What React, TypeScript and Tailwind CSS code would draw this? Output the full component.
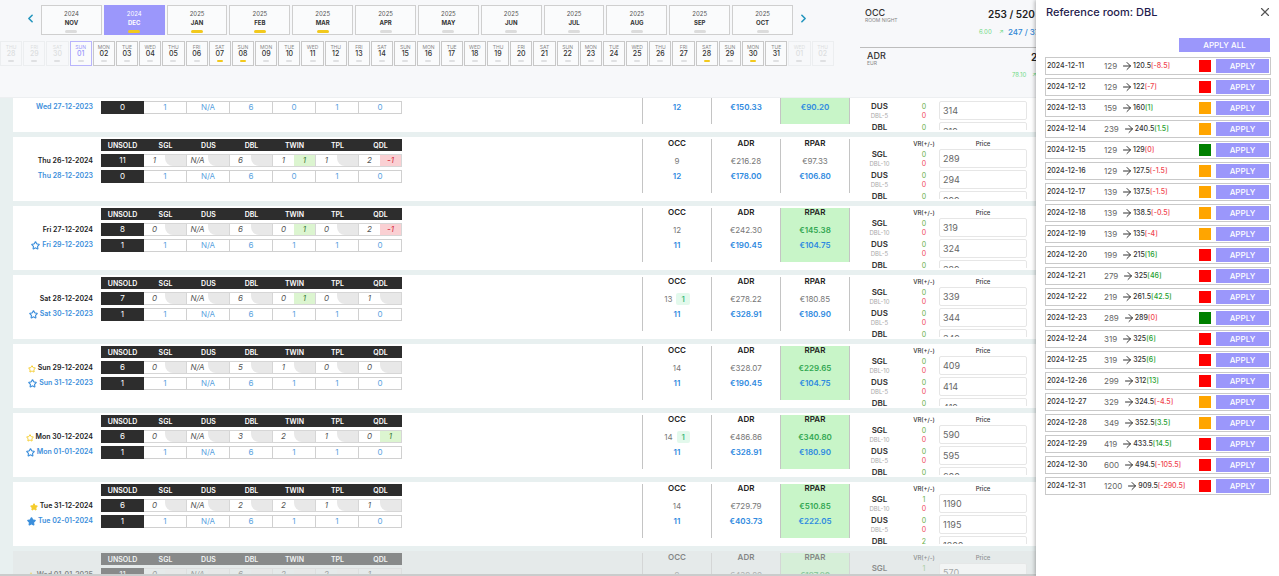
import { useState } from "react";
import { ArrowRight, ChevronLeft, ChevronRight, Star, X } from "lucide-react";
import clsx from "clsx";

type StarKind = "outline" | "filled" | undefined;

type Day = {
  date?: string;
  star?: StarKind;
  unsold?: string;
  rooms?: string[];
  deltas?: Record<number, string>;
  occ?: string;
  occUp?: boolean;
  adr?: string;
  rpar?: string;
  past?: {
    date: string;
    star?: StarKind;
    unsold: string;
    rooms: string[];
    occ: string;
    adr: string;
    rpar: string;
  };
  best?: boolean;
  closed?: boolean;
  prices: string[];
  vr: string[];
};

const roomTypes = ["SGL", "DUS", "DBL", "TWIN", "TPL", "QDL"];
const weekdays = ["SUN", "MON", "TUE", "WED", "THU", "FRI", "SAT"];

const months = [
  { year: 2024, name: "NOV" },
  { year: 2024, name: "DEC", event: true },
  { year: 2025, name: "JAN", event: true },
  { year: 2025, name: "FEB", event: true },
  { year: 2025, name: "MAR", event: true },
  { year: 2025, name: "APR" },
  { year: 2025, name: "MAY" },
  { year: 2025, name: "JUN" },
  { year: 2025, name: "JUL" },
  { year: 2025, name: "AUG" },
  { year: 2025, name: "SEP" },
  { year: 2025, name: "OCT" },
];

const calendar = [
  { week: "THU", num: "28", outside: true },
  { week: "FRI", num: "29", outside: true },
  { week: "SAT", num: "30", outside: true },
  ...Array.from({ length: 31 }, (_, i) => ({
    week: weekdays[i % 7],
    num: String(i + 1).padStart(2, "0"),
    outside: false,
  })),
  { week: "WED", num: "01", outside: true },
  { week: "THU", num: "02", outside: true },
];
const eventDays = ["07", "08", "28", "30"];

const days: Day[] = [
  {
    past: { date: "Wed 27-12-2023", unsold: "0", rooms: ["1", "N/A", "6", "0", "1", "0"], occ: "12", adr: "€150.33", rpar: "€90.20" },
    best: true,
    prices: ["309", "314", "319"],
    vr: ["0", "0", "0"],
  },
  {
    date: "Thu 26-12-2024",
    unsold: "11",
    rooms: ["1", "N/A", "6", "1", "1", "2"],
    deltas: { 3: "1", 5: "-1" },
    occ: "9",
    adr: "€216.28",
    rpar: "€97.33",
    past: { date: "Thu 28-12-2023", unsold: "0", rooms: ["1", "N/A", "6", "0", "1", "0"], occ: "12", adr: "€178.00", rpar: "€106.80" },
    prices: ["289", "294", "299"],
    vr: ["0", "0", "0"],
  },
  {
    date: "Fri 27-12-2024",
    unsold: "8",
    rooms: ["0", "N/A", "6", "0", "0", "2"],
    deltas: { 3: "1", 5: "-1" },
    occ: "12",
    adr: "€242.30",
    rpar: "€145.38",
    past: { date: "Fri 29-12-2023", star: "outline", unsold: "1", rooms: ["1", "N/A", "6", "1", "1", "0"], occ: "11", adr: "€190.45", rpar: "€104.75" },
    best: true,
    prices: ["319", "324", "329"],
    vr: ["0", "0", "0"],
  },
  {
    date: "Sat 28-12-2024",
    unsold: "7",
    rooms: ["0", "N/A", "6", "0", "0", "1"],
    deltas: { 3: "1" },
    occ: "13",
    occUp: true,
    adr: "€278.22",
    rpar: "€180.85",
    past: { date: "Sat 30-12-2023", star: "outline", unsold: "1", rooms: ["1", "N/A", "6", "1", "1", "0"], occ: "11", adr: "€328.91", rpar: "€180.90" },
    prices: ["339", "344", "349"],
    vr: ["0", "0", "0"],
  },
  {
    date: "Sun 29-12-2024",
    star: "outline",
    unsold: "6",
    rooms: ["0", "N/A", "5", "1", "0", "0"],
    occ: "14",
    adr: "€328.07",
    rpar: "€229.65",
    past: { date: "Sun 31-12-2023", star: "outline", unsold: "1", rooms: ["1", "N/A", "6", "1", "1", "0"], occ: "11", adr: "€190.45", rpar: "€104.75" },
    best: true,
    prices: ["409", "414", "419"],
    vr: ["0", "0", "0"],
  },
  {
    date: "Mon 30-12-2024",
    star: "outline",
    unsold: "6",
    rooms: ["0", "N/A", "3", "2", "1", "0"],
    deltas: { 5: "1" },
    occ: "14",
    occUp: true,
    adr: "€486.86",
    rpar: "€340.80",
    past: { date: "Mon 01-01-2024", star: "outline", unsold: "1", rooms: ["1", "N/A", "6", "1", "1", "0"], occ: "11", adr: "€328.91", rpar: "€180.90" },
    best: true,
    prices: ["590", "595", "600"],
    vr: ["0", "0", "0"],
  },
  {
    date: "Tue 31-12-2024",
    star: "filled",
    unsold: "6",
    rooms: ["0", "N/A", "2", "2", "1", "1"],
    occ: "14",
    adr: "€729.79",
    rpar: "€510.85",
    past: { date: "Tue 02-01-2024", star: "filled", unsold: "1", rooms: ["1", "N/A", "6", "1", "1", "0"], occ: "11", adr: "€403.73", rpar: "€222.05" },
    best: true,
    prices: ["1190", "1195", "1200"],
    vr: ["1", "0", "2"],
  },
  {
    date: "Wed 01-01-2025",
    star: "filled",
    unsold: "11",
    rooms: ["0", "N/A", "6", "2", "2", "1"],
    occ: "9",
    adr: "€439.80",
    rpar: "€197.90",
    best: true,
    closed: true,
    prices: ["570"],
    vr: ["1"],
  },
];

// [date, current price, suggested price, difference, status]
const suggestions: [string, string, string, string, "red" | "orange" | "green"][] = [
  ["2024-12-11", "129", "120.5", "-8.5", "red"],
  ["2024-12-12", "129", "122", "-7", "red"],
  ["2024-12-13", "159", "160", "1", "orange"],
  ["2024-12-14", "239", "240.5", "1.5", "orange"],
  ["2024-12-15", "129", "129", "0", "green"],
  ["2024-12-16", "129", "127.5", "-1.5", "orange"],
  ["2024-12-17", "139", "137.5", "-1.5", "orange"],
  ["2024-12-18", "139", "138.5", "-0.5", "orange"],
  ["2024-12-19", "139", "135", "-4", "orange"],
  ["2024-12-20", "199", "215", "16", "red"],
  ["2024-12-21", "279", "325", "46", "red"],
  ["2024-12-22", "219", "261.5", "42.5", "red"],
  ["2024-12-23", "289", "289", "0", "green"],
  ["2024-12-24", "319", "325", "6", "red"],
  ["2024-12-25", "319", "325", "6", "red"],
  ["2024-12-26", "299", "312", "13", "red"],
  ["2024-12-27", "329", "324.5", "-4.5", "orange"],
  ["2024-12-28", "349", "352.5", "3.5", "orange"],
  ["2024-12-29", "419", "433.5", "14.5", "red"],
  ["2024-12-30", "600", "494.5", "-105.5", "red"],
  ["2024-12-31", "1200", "909.5", "-290.5", "red"],
];

const statusColor = {
  red: "bg-[#ff0000]",
  orange: "bg-[#ffa500]",
  green: "bg-[#008000]",
};

function MonthBar() {
  const [active, setActive] = useState("DEC");
  return (
    <div className="flex items-start pl-6">
      <button aria-label="Previous months" className="mt-[7px] mr-1 text-[#2596be]">
        <ChevronLeft size={13} strokeWidth={3} />
      </button>
      <div className="grid w-[752px] grid-cols-12 gap-[2px]">
        {months.map((m) => (
          <button
            key={m.name}
            onClick={() => setActive(m.name)}
            className={clsx(
              "flex h-[30px] flex-col items-center border text-[6px] leading-[9px] pt-[3px]",
              active === m.name
                ? "border-[#9b97fb] bg-[#9b97fb] text-white"
                : "border-[#cfcfcf] bg-[#fafbfc] text-[#555]",
            )}
          >
            <span>{m.year}</span>
            <span className={clsx("text-[6px] font-bold", active !== m.name && "text-[#333]")}>{m.name}</span>
            <span className={clsx("mt-[3px] h-[3px] w-3 rounded-xs", m.event ? "bg-[#f2c91d]" : "bg-[#dcdcdc]")} />
          </button>
        ))}
      </div>
      <button aria-label="Next months" className="mt-[7px] ml-1 text-[#2596be]">
        <ChevronRight size={13} strokeWidth={3} />
      </button>
    </div>
  );
}

function DayBar() {
  return (
    <div className="mt-[6px] flex w-[834px] gap-px">
      {calendar.map((d, i) => (
        <button
          key={i}
          className={clsx(
            "flex h-[25px] min-w-0 flex-1 flex-col items-center border pt-[2px] text-[5px] leading-[6px]",
            d.outside
              ? "border-[#eceef0] text-[#dcdee0]"
              : d.num === "01"
                ? "border-[#b9b5fb] bg-[#fafbfc] text-[#9b97fb]"
                : "border-[#c8c8c8] bg-[#fafbfc] text-[#888]",
          )}
        >
          <span>{d.week}</span>
          <span
            className={clsx(
              "text-[7px] leading-[7px] font-medium",
              !d.outside && d.num !== "01" && "text-[#333]",
            )}
          >
            {d.num}
          </span>
          <span
            className={clsx(
              "mt-[3px] h-[2px] w-[6px] rounded-xs",
              !d.outside && eventDays.includes(d.num) ? "bg-[#f2c91d]" : "bg-[#dfe0e2]",
            )}
          />
        </button>
      ))}
    </div>
  );
}

function Summary() {
  return (
    <div className="w-[176px] shrink-0 overflow-hidden whitespace-nowrap">
      <div className="flex h-[42px] items-start pl-[5px]">
        <div className="w-[114px] shrink-0 pt-[3px]">
          <div className="text-[9px] leading-[9px] font-medium text-[#333]">OCC</div>
          <div className="text-[5px] leading-[6px] text-[#888]">ROOM NIGHT</div>
        </div>
        <div className="shrink-0">
          <div className="pl-[9px] text-[10px] leading-[18px] font-semibold text-[#222]">253 / 520</div>
          <div className="flex items-center leading-[18px]">
            <span className="w-5 text-[6px] text-[#6fd985]">6.00</span>
            <span className="w-[9px] text-[6px] text-[#6fd985]">↗</span>
            <span className="text-[8px] font-medium text-[#2f86d6]">247 / 377</span>
          </div>
        </div>
      </div>
      <div className="flex h-[50px] items-start border-t border-[#bdbdbd] pl-[7px]">
        <div className="w-[145px] shrink-0 pt-[3px]">
          <div className="text-[9px] leading-[9px] font-medium text-[#333]">ADR</div>
          <div className="text-[5px] leading-[6px] text-[#888]">EUR</div>
        </div>
        <div className="shrink-0">
          <div className="pl-[19px] text-[10px] leading-[18px] font-semibold text-[#222]">2</div>
          <div className="flex items-center text-[6px] leading-[18px] text-[#6fd985]">
            <span className="w-5">78.10</span>
            <span>↗</span>
          </div>
        </div>
      </div>
    </div>
  );
}

function DateLabel({ date, star, past }: { date?: string; star?: StarKind; past?: boolean }) {
  return (
    <div
      className={clsx(
        "flex h-[15px] items-center justify-end gap-[2px] text-[7px] font-semibold",
        past ? "text-[#3b8edb]" : "text-[#222]",
      )}
    >
      {star && (
        <Star
          size={past ? 9 : 8}
          strokeWidth={3}
          fill={star === "filled" ? "currentColor" : "none"}
          className={past ? "text-[#3b8edb]" : "text-[#f5cc2a]"}
        />
      )}
      {date}
    </div>
  );
}

function UnsoldTable({ day }: { day: Day }) {
  return (
    <table className="-mt-px h-fit w-[301px] table-fixed border-separate border-spacing-x-0 border-spacing-y-[3px] text-center text-[8px] leading-[11px]">
      <thead className={clsx(!day.date && "invisible")}>
        <tr className="h-3 bg-[#2d2d2d] text-[7px] text-white">
          <th className="w-[43px] p-0 font-semibold">UNSOLD</th>
          {roomTypes.map((r) => (
            <th key={r} className="p-0 font-semibold">{r}</th>
          ))}
        </tr>
      </thead>
      <tbody>
        <tr className="h-[13px]">
          <td className="bg-[#2d2d2d] p-0 text-white">{day.unsold}</td>
          {roomTypes.map((r, i) => {
            const delta = day.deltas?.[i];
            return (
              <td key={r} className="border-y border-r border-[#d6d6d6] p-0 text-[#555] italic">
                <div className="flex">
                  <span className="w-1/2">{day.rooms?.[i]}</span>
                  <span
                    className={clsx(
                      "h-[11px] w-1/2",
                      !delta && "rounded-bl-lg bg-[#e8e8e8]",
                      delta === "1" && "bg-[#dcf5d0] text-[#3c7a35]",
                      delta === "-1" && "bg-[#fad0d3] text-[#d6293c]",
                    )}
                  >
                    {delta}
                  </span>
                </div>
              </td>
            );
          })}
        </tr>
        {day.past && (
          <tr className="h-[13px]">
            <td className="bg-[#2d2d2d] p-0 text-white">{day.past.unsold}</td>
            {day.past.rooms.map((v, i) => (
              <td key={i} className="border-y border-r border-[#d0d0d0] p-0 text-[#5ba3e0]">{v}</td>
            ))}
          </tr>
        )}
      </tbody>
    </table>
  );
}

function Metric({ label, now, past, up, best }: { label: string; now?: string; past?: string; up?: boolean; best?: boolean }) {
  return (
    <div
      className={clsx(
        "h-[54px] w-[69px] border-l border-[#c4c4c4] text-center text-[8px] leading-[15px]",
        best && "bg-[#c8f5c8]",
      )}
    >
      <div className="mb-[7px] text-[8px] leading-[8px] font-semibold text-[#222]">{label}</div>
      <div className={clsx("h-[15px]", best ? "font-semibold text-[#34a853]" : "text-[#777]")}>
        {now}
        {up && <span className="ml-1 rounded-xs bg-[#e3f9ec] px-[5px] py-px font-medium text-[#2fb673]">1</span>}
      </div>
      <div className="font-semibold text-[#2f8ae0]">{past}</div>
    </div>
  );
}

function Prices({ day }: { day: Day }) {
  const rates = [
    ["SGL", "DBL-10"],
    ["DUS", "DBL-5"],
    ["DBL", ""],
  ];
  return (
    <div className={clsx("h-[60px] w-[177px] overflow-hidden", !day.date && "[&>*:nth-child(-n+2)]:invisible")}>
      <div className="flex h-[10px] text-center text-[6px] leading-[9px] font-medium text-[#333]">
        <span className="ml-[59px] w-[30px]">VR(+/-)</span>
        <span className="flex-1">Price</span>
      </div>
      {day.prices.map((price, i) => (
        <div key={price} className="flex h-[21px] text-center">
          <div className="w-[59px]">
            <div className="text-[8px] leading-[11px] font-semibold text-[#333]">{rates[i][0]}</div>
            <div className="text-[6px] leading-[8px] text-[#aaa]">{rates[i][1]}</div>
          </div>
          <div className="w-[30px] text-[7px]">
            <div className="leading-[11px] text-[#6bb04a]">{day.vr[i]}</div>
            {i < 2 && <div className="leading-[8px] text-[#f04a5e]">0</div>}
          </div>
          <input
            aria-label={`${rates[i][0]} price`}
            defaultValue={price}
            className="h-[19px] min-w-0 flex-1 rounded-xs border border-[#e6e6e6] bg-white px-[3px] text-[9px] text-[#666]"
          />
        </div>
      ))}
    </div>
  );
}

function DayCard({ day }: { day: Day }) {
  return (
    <article
      className={clsx(
        "flex h-16 shrink-0 pt-[2px] pr-[9px]",
        day.closed ? "bg-[#e5eaea]" : "bg-white",
      )}
    >
      <div className={clsx("flex flex-1", day.closed && "opacity-50")}>
        <div className="mr-2 w-20 pt-[15px]">
          <DateLabel date={day.date} star={day.star} />
          <DateLabel date={day.past?.date} star={day.past?.star} past />
        </div>
        <div className="-mt-[2px]">
          <UnsoldTable day={day} />
        </div>
        <div className="ml-auto flex">
          <Metric label="OCC" now={day.occ} past={day.past?.occ} up={day.occUp} />
          <Metric label="ADR" now={day.adr} past={day.past?.adr} />
          <Metric label="RPAR" now={day.rpar} past={day.past?.rpar} best={day.best} />
          <div className="h-[54px] w-px bg-[#c4c4c4]" />
          <Prices day={day} />
        </div>
      </div>
    </article>
  );
}

function ReferencePanel() {
  return (
    <aside className="z-10 w-[243px] shrink-0 bg-white pr-2 pl-[9px] shadow-[-1px_0_4px_rgba(0,0,0,0.3)]">
      <div className="flex h-6 items-center justify-between">
        <h2 className="pl-px text-[11px] font-medium text-[#1f1c4d]">Reference room: DBL</h2>
        <button aria-label="Close" className="-mr-px text-[#555]">
          <X size={14} strokeWidth={2} />
        </button>
      </div>
      <div className="mt-[14px] mb-[5px] flex justify-end pr-px">
        <button className="h-[14px] w-[91px] bg-[#9b97fb] text-[8px] leading-[14px] font-medium text-white">APPLY ALL</button>
      </div>
      <ul className="flex flex-col gap-[3px]">
        {suggestions.map(([date, from, to, diff, status]) => (
          <li key={date} className="flex h-[18px] items-center border border-[#c9c9c9] pr-px pl-px text-[7px] text-[#333]">
            <span className="w-[57px] font-medium">{date}</span>
            <span className="mr-1 text-[8px] text-[#666]">{from}</span>
            <ArrowRight size={12} strokeWidth={2} className="text-[#333]" />
            <span className="font-medium">{to}</span>
            <span className={Number(diff) > 0 ? "font-medium text-[#1e9e2e]" : "font-medium text-[#f0454f]"}>[{diff}]</span>
            <span className={clsx("mr-[5px] ml-auto size-3", statusColor[status])} />
            <button className="h-[14px] w-[53px] bg-[#9b97fb] text-[8px] leading-[14px] font-medium text-white">APPLY</button>
          </li>
        ))}
      </ul>
    </aside>
  );
}

export default function App() {
  return (
    <div className="flex h-screen overflow-hidden bg-[#e8f0f0] font-['Inter','Liberation_Sans',sans-serif]">
      <main className="flex min-w-0 flex-1 flex-col overflow-hidden">
        <header className="flex h-[98px] shrink-0 justify-between overflow-hidden border-b border-[#edeff1] bg-[#f7f8fa] pt-[5px]">
          <div>
            <MonthBar />
            <DayBar />
          </div>
          <Summary />
        </header>
        <div className="min-h-0 flex-1 overflow-hidden pl-[13px]">
          <div className="-mt-[30px] flex flex-col gap-[5px]">
            {days.map((day, i) => (
              <DayCard key={i} day={day} />
            ))}
          </div>
        </div>
        <div className="h-[2px] shrink-0 bg-[#c9cccc]" />
      </main>
      <ReferencePanel />
    </div>
  );
}
